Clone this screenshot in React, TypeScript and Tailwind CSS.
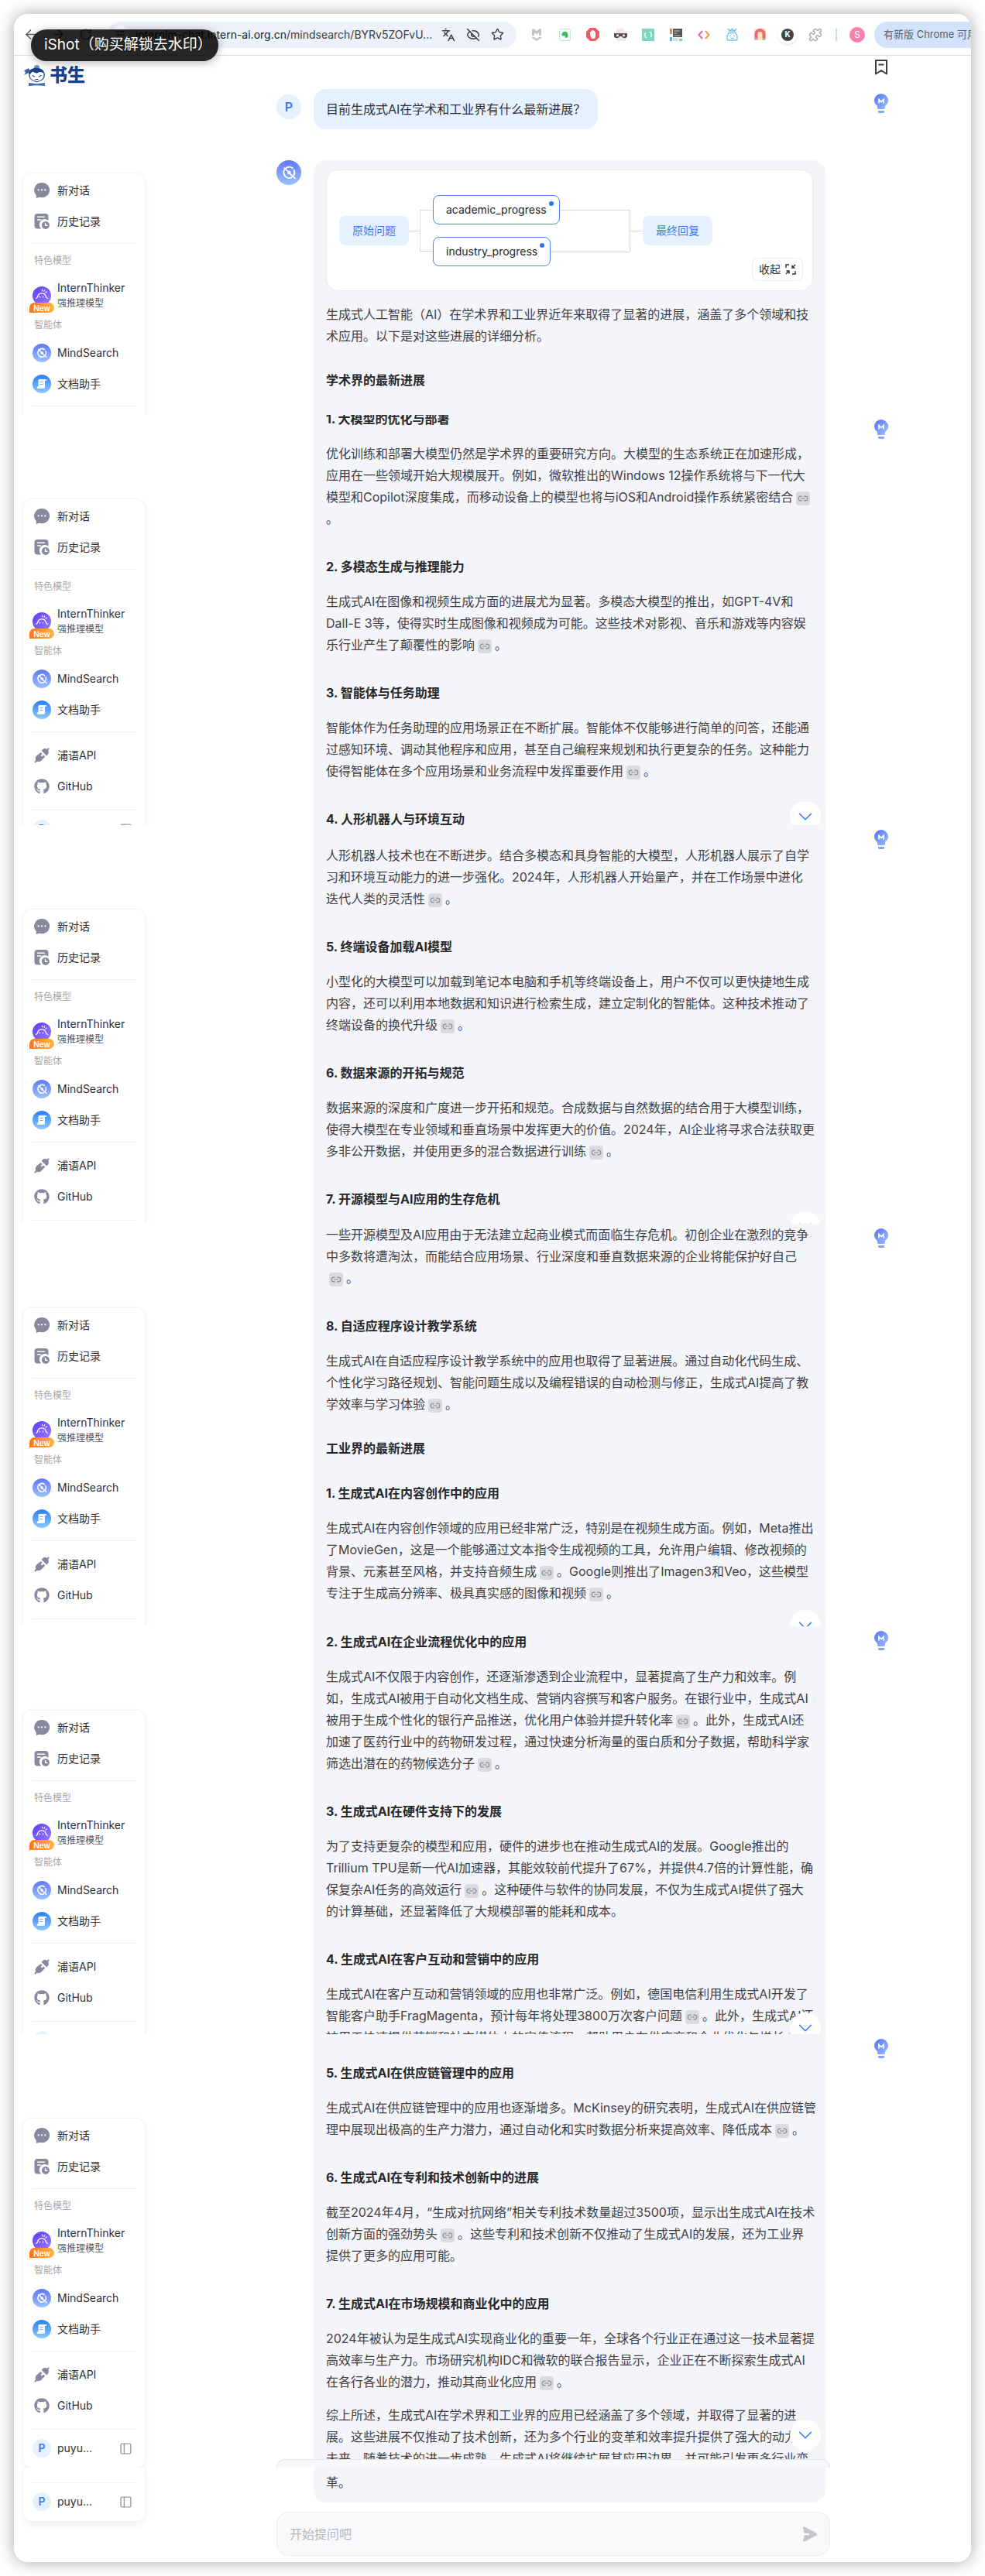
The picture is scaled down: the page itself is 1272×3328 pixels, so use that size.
import { useState, type ReactNode } from "react";
import { ArrowLeft, ArrowRight, ChevronDown, EyeOff, Languages, Link2, PanelLeft, Puzzle, RotateCw, SlidersHorizontal, Star } from "lucide-react";
import { FaGithub } from "react-icons/fa";

/* ---------- icons ---------- */

function ChatIcon() {
  return (
    <svg width="20" height="20" viewBox="0 0 20 20" aria-hidden="true">
      <path d="M10 0a10 9.6 0 1 1-2.800 18.800L2.800 20v-3.800A9.600 9.600 0 0 1 10 0z" fill="#868a9c" />
      <circle cx="5.600" cy="9.400" r="1.100" fill="#fff" />
      <circle cx="10" cy="9.400" r="1.100" fill="#fff" />
      <circle cx="14.400" cy="9.400" r="1.100" fill="#fff" />
    </svg>
  );
}

function HistoryIcon() {
  return (
    <svg width="20" height="20" viewBox="0 0 20 20" aria-hidden="true">
      <path d="M4.500 0h10A4 4 0 0 1 18.500 4v4.800A6.600 6.600 0 0 0 9.200 19.500H4.500a4 4 0 0 1-4-4V4a4 4 0 0 1 4-4z" fill="#868a9c" />
      <path d="M4.500 4.300h9M4.500 8h4" stroke="#fff" strokeWidth="1.600" strokeLinecap="round" />
      <circle cx="14.900" cy="15" r="5" fill="#868a9c" />
      <path d="M14.600 12.500V15.300H17" stroke="#fff" strokeWidth="1.400" fill="none" strokeLinecap="round" />
    </svg>
  );
}

function ThinkerIcon() {
  return (
    <svg width="24" height="24" viewBox="0 0 24 24" aria-hidden="true">
      <defs>
        <linearGradient id="thinker" x1="0" y1="0" x2="1" y2="1">
          <stop offset="0" stopColor="#5b3bfa" />
          <stop offset="1" stopColor="#9a7bff" />
        </linearGradient>
      </defs>
      <circle cx="12" cy="12" r="12" fill="url(#thinker)" />
      <path d="M4.500 15.500c1.500-.5 2-1.500 2.300-3a5.500 5.500 0 0 1 10.400.2c.3 1.300.9 2.300 2.300 2.800" stroke="#fff" strokeWidth="1.300" fill="none" strokeLinecap="round" />
      <path d="M12.500 4.200v1.600M15.600 4.800l-.6 1.600M18.200 7l-1.300 1.100" stroke="#fff" strokeWidth="1.200" strokeLinecap="round" />
      <path d="M9.500 13v1M13.500 13v1" stroke="#fff" strokeWidth="1.300" strokeLinecap="round" />
    </svg>
  );
}

function SearchLogo({ className }: { className: string }) {
  return (
    <svg className={className} viewBox="0 0 24 24" aria-hidden="true">
      <defs>
        <linearGradient id="mind" x1="0" y1="0" x2="0" y2="1">
          <stop offset="0" stopColor="#5f78f8" />
          <stop offset="1" stopColor="#9dc0fd" />
        </linearGradient>
      </defs>
      <circle cx="12" cy="12" r="12" fill="url(#mind)" />
      <path d="M15.500 7.600A5.300 5.300 0 1 0 14.800 16.600M17 9.600a5.300 5.300 0 0 1-.3 5" stroke="#fff" strokeWidth="1.500" fill="none" strokeLinecap="round" />
      <circle cx="12.200" cy="12" r="1.800" fill="#fff" />
      <path d="M7.500 7.600l3.500 3M13.500 13.500l4.500 4" stroke="#fff" strokeWidth="1.300" strokeLinecap="round" />
    </svg>
  );
}

function DocIcon() {
  return (
    <svg width="24" height="24" viewBox="0 0 24 24" aria-hidden="true">
      <defs>
        <linearGradient id="doc" x1="0" y1="0" x2="0" y2="1">
          <stop offset="0" stopColor="#2a7ff8" />
          <stop offset="1" stopColor="#8fc8fd" />
        </linearGradient>
      </defs>
      <circle cx="12" cy="12" r="12" fill="url(#doc)" />
      <path d="M8.500 6h8.500a1.300 1.300 0 0 1 1.300 1.800H16V16a2 2 0 0 1-2 2H7a1.600 1.600 0 0 1-1-2.500h1.500V7z" fill="#fff" />
      <path d="M9.500 9.500h4M9.500 12.500h4" stroke="#6fb0fb" strokeWidth="1" />
    </svg>
  );
}

function PlugIcon() {
  return (
    <svg width="20" height="20" viewBox="0 0 20 20" fill="#868a9c" aria-hidden="true">
      <path d="M19.800 1.200L18.800.2l-2.200 1.600a5 5 0 0 0-5.800.8L9.600 3.800l6.600 6.600 1.200-1.200a5 5 0 0 0 .8-5.800z" />
      <path d="M8.700 5.900L3.200 10.600a5 5 0 0 0-1.100 5.300L.2 18.800l1 1 2.700-2a5 5 0 0 0 5.400-1l4.900-5.300-2.100-2-2 2.100-1.600-1.600 2-2z" />
    </svg>
  );
}

function BulbIcon() {
  return (
    <svg width="18" height="25" viewBox="0 0 18 25" aria-hidden="true">
      <defs>
        <linearGradient id="bulb" x1="0" y1="0" x2="1" y2="1">
          <stop offset="0" stopColor="#5470f8" />
          <stop offset="1" stopColor="#9ec2fd" />
        </linearGradient>
      </defs>
      <path d="M9 0a9 9 0 0 1 9 9c0 3.500-2 5.200-3.700 6.700L13.600 20H4.400l-.7-4.300C2 14.200 0 12.500 0 9a9 9 0 0 1 9-9z" fill="url(#bulb)" />
      <path d="M5 22h8v1.500a1.500 1.500 0 0 1-1.500 1.500h-5A1.500 1.500 0 0 1 5 23.500z" fill="#86a6fb" />
      <path d="M6 12.500v-5l3 3 3-3v5" stroke="#fff" strokeWidth="1.700" fill="none" />
    </svg>
  );
}

function BrandMark() {
  return (
    <svg width="28" height="27" viewBox="0 0 28 33" preserveAspectRatio="none" aria-hidden="true">
      <circle cx="16.500" cy="3.500" r="3.500" fill="#7a8fbe" />
      <path d="M6 13C6 7 11 4.500 16 4.500S26 7.500 26.500 14l-3-2.500-3.500-.5-4 2-5-2.500L7.500 15z" fill="#17408e" />
      <path d="M0 9l6-4 1 3 3-1-5 6-5 3 2-4z" fill="#4764a3" />
      <path d="M7 14c-1 6 1 10 9.500 12.500C25 24 27 20 26 13" stroke="#17408e" strokeWidth="1.200" fill="none" />
      <path d="M10.500 16l3.500 2.500M22.500 16L19 18.500M14.500 22.500h4" stroke="#17408e" strokeWidth="1.300" />
      <path d="M6 28l10.500 1.500L27 28v5l-10.500-1L6 33z" fill="#4a69a9" />
    </svg>
  );
}

function CollapseIcon() {
  return (
    <svg width="14" height="14" viewBox="0 0 14 14" fill="none" stroke="currentColor" strokeWidth="1.400" aria-hidden="true">
      <path d="M1 5V1h4M13 9v4H9M9 1.500V5h3.500M9 5l4-4M5 12.500V9H1.500M5 9l-4 4" />
    </svg>
  );
}

/* ---------- shared parts ---------- */

function Cite() {
  return (
    <button type="button" aria-label="查看引用" className="mx-1 inline-flex h-[18px] w-[18px] items-center justify-center rounded bg-[#d9dbe0] align-[-3px] text-[#8b8e98]">
      <Link2 size={14} />
    </button>
  );
}

/* "[]" inside a line marks a citation chip */
function Line({ text }: { text: string }) {
  const parts = text.split("[]");
  return (
    <span className="block h-7 whitespace-nowrap">
      {parts.map((part, i) => (
        <span key={i}>
          {i > 0 && <Cite />}
          {part}
        </span>
      ))}
    </span>
  );
}

function Para({ lines }: { lines: string[] }) {
  return (
    <p className="mb-[34px]">
      {lines.map((line) => (
        <Line key={line} text={line} />
      ))}
    </p>
  );
}

function Title({ children }: { children: ReactNode }) {
  return <h3 className="mb-[17px] font-bold text-[#27282c]">{children}</h3>;
}

function UserBadge({ className }: { className: string }) {
  return <span className={className}>P</span>;
}

const rowStyle = "flex h-10 w-full items-center gap-2.5 text-left text-sm text-[#2f3035]";

function AccountRow() {
  return (
    <div className="mx-3 border-t border-[#f0f0f2] pt-3 pb-[13px]">
      <div className="flex items-center justify-between">
        <a href="#account" className="flex items-center gap-2 text-sm text-[#2f3035]">
          <UserBadge className="flex size-6 items-center justify-center rounded-full bg-[#e5f1fe] text-sm font-semibold text-[#3a7bf5]" />
          puyu...
        </a>
        <button type="button" aria-label="收起侧栏" className="mr-1 text-[#9a9dab]">
          <PanelLeft size={17} />
        </button>
      </div>
    </div>
  );
}

function SidePanel() {
  return (
    <nav className="ml-[11px] w-[159px] rounded-xl border border-[#f2f3f5] bg-white pt-0.5 shadow-[0_3px_10px_rgba(0,0,0,0.05)]">
      <div className="mx-3 flex flex-col border-b border-[#f0f0f2] px-0.5 pb-2">
        <button type="button" className={rowStyle}><ChatIcon />新对话</button>
        <button type="button" className={rowStyle}><HistoryIcon />历史记录</button>
      </div>
      <p className="mx-3.5 mt-3 text-xs leading-5 text-[#a6a7ac]">特色模型</p>
      <a href="#thinker" className="mx-3 mt-[13px] flex h-11 items-center gap-2">
        <span className="relative">
          <ThinkerIcon />
          <span className="absolute -bottom-2.5 -left-1 flex h-[13px] w-8 items-center justify-center rounded-full rounded-bl-sm bg-linear-to-r from-[#ff7416] to-[#ffb445] text-[10px] leading-none font-semibold text-white">New</span>
        </span>
        <span className="text-[#2f3035]">
          <span className="block text-sm leading-5">InternThinker</span>
          <span className="block text-xs leading-5 whitespace-nowrap text-[#55565b]">强推理模型</span>
        </span>
      </a>
      <p className="mx-3.5 mt-1.5 text-xs leading-5 text-[#a6a7ac]">智能体</p>
      <div className="mx-3 flex flex-col border-b border-[#f0f0f2] pt-1.5 pb-2">
        <a href="#mindsearch" className="flex h-10 items-center gap-2 text-sm text-[#2f3035]"><SearchLogo className="size-6" />MindSearch</a>
        <a href="#docs" className="flex h-10 items-center gap-2 text-sm text-[#2f3035]"><DocIcon />文档助手</a>
      </div>
      <div className="mx-3 flex flex-col px-0.5 py-2.5">
        <a href="#api" className={rowStyle}><PlugIcon />浦语API</a>
        <a href="#github" className={rowStyle}><FaGithub size={20} color="#868a9c" />GitHub</a>
      </div>
      <AccountRow />
    </nav>
  );
}

function Bulb() {
  return (
    <button type="button" aria-label="灵感" className="block"><BulbIcon /></button>
  );
}

function ScrollDown({ className }: { className: string }) {
  return (
    <button type="button" aria-label="滚动到底部" className={className}>
      <ChevronDown size={30} strokeWidth={1.25} />
    </button>
  );
}

function Slice({ className, bodyClass, scroll, children }: { className: string; bodyClass: string; scroll: string; children: ReactNode }) {
  return (
    <section className={className}>
      <aside className="w-[339px] shrink-0 pt-[108px]"><SidePanel /></aside>
      <div className="min-w-0 flex-1 pr-1.5 pl-12">
        <div className="relative h-full overflow-hidden bg-[#f4f5f9]">
          <div className={bodyClass}>{children}</div>
          <ScrollDown className={scroll} />
        </div>
      </div>
      <div className="w-[182px] shrink-0 pt-1.5 pl-[57px]"><Bulb /></div>
    </section>
  );
}

const tag = "flex h-[38px] w-[90px] items-center justify-center rounded-lg bg-[#e5f1fe] text-[#3a7bf5]";
const node = "relative flex h-[38px] w-fit items-center rounded-lg border border-[#4c87f6] bg-white px-4 text-[#1d1e22]";
const dot = "absolute top-[7px] right-[7px] size-1.5 rounded-full bg-[#2f74f6]";

function FlowCard() {
  return (
    <div className="relative mb-4 flex h-[157px] rounded-2xl border border-[#ebecf2] bg-white pt-8 pl-4 text-sm">
      <div className="flex h-[92px] items-center">
        <button type="button" className={tag}>原始问题</button>
        <span className="h-px w-3.5 bg-[#d8dadf]" />
        <span className="h-[54px] w-[17px] border-y border-l border-[#d8dadf]" />
      </div>
      <div className="flex h-[92px] w-[254px] flex-col justify-between">
        <div className="flex items-center">
          <button type="button" className={node}>academic_progress<span className={dot} /></button>
          <span className="h-px flex-1 bg-[#d8dadf]" />
        </div>
        <div className="flex items-center">
          <button type="button" className={node}>industry_progress<span className={dot} /></button>
          <span className="h-px flex-1 bg-[#d8dadf]" />
        </div>
      </div>
      <div className="flex h-[92px] items-center">
        <span className="h-[54px] w-px bg-[#d8dadf]" />
        <span className="h-px w-4 bg-[#d8dadf]" />
        <button type="button" className={tag}>最终回复</button>
      </div>
      <button type="button" className="absolute right-3 bottom-3 flex h-[30px] items-center gap-1.5 rounded-lg border border-[#ebecf0] bg-white px-2 text-[#2f3035]">
        收起<CollapseIcon />
      </button>
    </div>
  );
}

const ext = "flex w-5 items-center justify-center";

function Toolbar() {
  return (
    <header className="flex h-[54px] items-center border-b border-[#dcdde0] pl-3 text-[#5f6368]">
      <div className="flex w-[109px] shrink-0 items-center gap-[17px]">
        <ArrowLeft size={19} /><ArrowRight size={19} /><RotateCw size={17} />
      </div>
      <div className="flex h-[34px] w-[528px] shrink-0 items-center rounded-full bg-[#edf1fa] pl-1 text-[#3c4043]">
        <span className="flex size-6 items-center justify-center rounded-full bg-white"><SlidersHorizontal size={14} /></span>
        <span className="ml-2 text-sm whitespace-nowrap"><span className="text-[#202124]">internlm-chat.intern-ai.org.cn</span>/mindsearch/BYRv5ZOFvU...</span>
        <span className="ml-auto flex items-center gap-3.5 pr-4"><Languages size={18} /><EyeOff size={18} /><Star size={17} /></span>
      </div>
      <div className="ml-4 flex shrink-0 items-center gap-4">
        <span className={ext}>
          <svg width="12" height="16" viewBox="0 0 12 16" fill="#c4c4c4"><path d="M0 1l2-1 4 3 4-3 2 1v8h-3V5L6 7.500 3 5v4H0zM0 11h3l3 2 3-2h3v1l-6 4-6-4z" /></svg>
        </span>
        <span className={ext}>
          <svg width="15" height="16" viewBox="0 0 15 16"><rect x=".5" y=".5" width="14" height="15" rx="2" fill="#f7fcf8" stroke="#a5dfb4" strokeDasharray="2 1" /><path d="M5 4.500c3-1.500 6.500-.5 6.500 4 0 2.500-1 3.500-3 3.500l-1-2.500-4-.5V6.500z" fill="#43b965" /></svg>
        </span>
        <span className={ext}>
          <svg width="17" height="17" viewBox="0 0 17 17"><path d="M5 0h7l5 5v7l-5 5H5l-5-5V5z" fill="#ee5a60" /><path d="M5 8V5h1.500V3.500H8V3h1.500v1H11v1.500h1V10c0 3-1.500 4-3.500 4S6 12 5 8z" fill="#fff" /></svg>
        </span>
        <span className={ext}>
          <svg width="17" height="16" viewBox="0 0 17 16"><path d="M3 0h8l4 4v12H3z" fill="#ebebeb" /><path d="M0 6h17v4c-1 3-6 3-7 0H7c-1 3-6 3-7 0z" fill="#5f4a50" /><circle cx="4.500" cy="8.700" r="1.500" fill="#fff" /><circle cx="12.500" cy="8.700" r="1.500" fill="#fff" /></svg>
        </span>
        <span className={ext}>
          <svg width="16" height="16" viewBox="0 0 16 16"><path d="M0 0h16v16H0z" fill="#80d5be" /><path d="M5 5a4.500 4.500 0 0 0 0 6l1 1M11 11a4.500 4.500 0 0 0 0-6l-1-1" stroke="#fff" fill="none" strokeWidth="1.300" /></svg>
        </span>
        <span className={ext}>
          <svg width="16" height="16" viewBox="0 0 16 16"><path d="M4 0h12v11H4z" fill="#555" /><path d="M0 0h3v7H0z" fill="#f08072" /><path d="M0 11h3v5H0z" fill="#54b5e8" /><path d="M4 12h7v4H4z" fill="#ddd" /><path d="M12 13h4v3h-4z" fill="#6dd6a8" /><path d="M5.500 3h7M5.500 6h4M5.500 9h8" stroke="#ccc" /></svg>
        </span>
        <span className={ext}>
          <svg width="16" height="12" viewBox="0 0 16 12" fill="none" strokeWidth="2"><path d="M6 1L1.500 6 6 11" stroke="#ea62a8" /><path d="M10 1l4.500 5L10 11" stroke="#f79a4b" /></svg>
        </span>
        <span className={ext}>
          <svg width="15" height="17" viewBox="0 0 15 17" fill="none" stroke="#6fc3f2" strokeWidth="1.300"><path d="M2 1l2.500 3L7.500 1l3 3L13 1M3 4h9M3 6.500h9L14 11v3.500a1.500 1.500 0 0 1-1.500 1.500h-10A1.500 1.500 0 0 1 1 14.500V11z" /><path d="M5 9.500v1.500M10 9.500v1.500M5.500 13.300h4" /></svg>
        </span>
        <span className={ext}>
          <svg width="15" height="15" viewBox="0 0 15 15"><path d="M0 0h15v15H0z" fill="#fbe3c4" /><path d="M2.500 12.500V7a5 5 0 0 1 10 0v5.500" stroke="#e96a70" strokeWidth="4" fill="none" /><path d="M.5 12.500h4v2h-4zM10.500 12.500h4v2h-4z" fill="#a9a5a5" /></svg>
        </span>
        <span className={ext}>
          <span className="flex size-6 shrink-0 items-center justify-center rounded-full bg-white shadow"><span className="flex size-4 items-center justify-center rounded-full bg-[#444] text-[10px] font-bold text-white">K</span></span>
        </span>
        <span className={ext}><Puzzle size={18} color="#aaa" /></span>
      </div>
      <span className="ml-4 h-4 w-0.5 shrink-0 bg-[#c6dafc]" />
      <span className="ml-4 flex size-5 shrink-0 items-center justify-center rounded-full bg-[#f481ae] text-xs text-white">S</span>
      <button type="button" className="ml-3 flex h-[34px] min-w-0 flex-1 items-center overflow-hidden rounded-l-full bg-[#d3e3fd] pl-3 text-[13px] whitespace-nowrap text-[#55606e]">有新版 Chrome 可用</button>
    </header>
  );
}

export default function App() {
  const [question, setQuestion] = useState("");
  return (
    <div className="bg-white px-[18px] pt-[18px] pb-[18px] font-[Inter,'Noto_Sans_CJK_SC',sans-serif] text-[#3f4046]">
      <div className="relative rounded-[18px] bg-white shadow-[0_0_22px_rgba(0,0,0,0.35)]">
        <div className="overflow-hidden rounded-[18px]">
          <Toolbar />

          <section className="flex h-[464px] overflow-hidden">
            <aside className="w-[339px] shrink-0">
              <a href="#home" className="mt-[9px] ml-[13px] flex h-8 items-center gap-[5px] text-[23px] font-black text-[#17408e]"><BrandMark />书生</a>
              <div className="mt-[110px]"><SidePanel /></div>
            </aside>
            <div className="min-w-0 flex-1 pt-[43px] pr-1.5">
              <div className="flex items-start gap-4">
                <UserBadge className="mt-[7px] flex size-8 shrink-0 items-center justify-center rounded-full bg-[#e5f1fe] font-semibold text-[#3a7bf5]" />
                <p className="rounded-2xl bg-[#e5f1fe] px-4 py-3 leading-7 text-[#2f3035]">目前生成式AI在学术和工业界有什么最新进展？</p>
              </div>
              <div className="mt-10 flex gap-4">
                <SearchLogo className="size-8 shrink-0" />
                <div className="min-w-0 flex-1 rounded-t-2xl bg-[#f4f5f9] px-4 pt-3 pb-10 leading-7">
                  <FlowCard />
                  <p className="mb-[29px]">
                    <Line text="生成式人工智能（AI）在学术界和工业界近年来取得了显著的进展，涵盖了多个领域和技" />
                    <Line text="术应用。以下是对这些进展的详细分析。" />
                  </p>
                  <h2 className="font-bold text-[#27282c]">学术界的最新进展</h2>
                </div>
              </div>
            </div>
            <div className="w-[182px] shrink-0 pt-[5px] pl-[57px]">
              <button type="button" aria-label="收藏" className="mb-6 block text-[#3f4046]">
                <svg width="18" height="20" viewBox="0 0 18 20" fill="none" stroke="currentColor" strokeWidth="2" strokeLinejoin="round"><path d="M2 1h14v17.500L9 14l-7 4.500zM5.500 6.500h7" /></svg>
              </button>
              <Bulb />
            </div>
          </section>

          <Slice className="flex h-[530px] overflow-hidden" bodyClass="-mt-[9px] px-4 leading-7" scroll="absolute -bottom-[9px] right-1.5 flex size-10 items-center justify-center rounded-full bg-white text-[#3a7bf5]">
            <Title>1. 大模型的优化与部署</Title>
            <Para lines={["优化训练和部署大模型仍然是学术界的重要研究方向。大模型的生态系统正在加速形成，", "应用在一些领域开始大规模展开。例如，微软推出的Windows 12操作系统将与下一代大", "模型和Copilot深度集成，而移动设备上的模型也将与iOS和Android操作系统紧密结合[]", "。"]} />
            <Title>2. 多模态生成与推理能力</Title>
            <Para lines={["生成式AI在图像和视频生成方面的进展尤为显著。多模态大模型的推出，如GPT-4V和", "Dall-E 3等，使得实时生成图像和视频成为可能。这些技术对影视、音乐和游戏等内容娱", "乐行业产生了颠覆性的影响[]。"]} />
            <Title>3. 智能体与任务助理</Title>
            <Para lines={["智能体作为任务助理的应用场景正在不断扩展。智能体不仅能够进行简单的问答，还能通", "过感知环境、调动其他程序和应用，甚至自己编程来规划和执行更复杂的任务。这种能力", "使得智能体在多个应用场景和业务流程中发挥重要作用[]。"]} />
            <Title>4. 人形机器人与环境互动</Title>
          </Slice>

          <Slice className="flex h-[515px] overflow-hidden" bodyClass="px-4 pt-[25px] leading-7" scroll="absolute -bottom-6 right-1.5 flex size-10 items-center justify-center rounded-full bg-white text-[#3a7bf5]">
            <Para lines={["人形机器人技术也在不断进步。结合多模态和具身智能的大模型，人形机器人展示了自学", "习和环境互动能力的进一步强化。2024年，人形机器人开始量产，并在工作场景中进化", "迭代人类的灵活性[]。"]} />
            <Title>5. 终端设备加载AI模型</Title>
            <Para lines={["小型化的大模型可以加载到笔记本电脑和手机等终端设备上，用户不仅可以更快捷地生成", "内容，还可以利用本地数据和知识进行检索生成，建立定制化的智能体。这种技术推动了", "终端设备的换代升级[]。"]} />
            <Title>6. 数据来源的开拓与规范</Title>
            <Para lines={["数据来源的深度和广度进一步开拓和规范。合成数据与自然数据的结合用于大模型训练，", "使得大模型在专业领域和垂直场景中发挥更大的价值。2024年，AI企业将寻求合法获取更", "多非公开数据，并使用更多的混合数据进行训练[]。"]} />
            <Title>7. 开源模型与AI应用的生存危机</Title>
          </Slice>

          <Slice className="flex h-[520px] overflow-hidden" bodyClass="px-4 leading-7" scroll="absolute -bottom-[19px] right-1.5 flex size-10 items-center justify-center rounded-full bg-white text-[#3a7bf5]">
            <Para lines={["一些开源模型及AI应用由于无法建立起商业模式而面临生存危机。初创企业在激烈的竞争", "中多数将遭淘汰，而能结合应用场景、行业深度和垂直数据来源的企业将能保护好自己", "[]。"]} />
            <Title>8. 自适应程序设计教学系统</Title>
            <Para lines={["生成式AI在自适应程序设计教学系统中的应用也取得了显著进展。通过自动化代码生成、", "个性化学习路径规划、智能问题生成以及编程错误的自动检测与修正，生成式AI提高了教", "学效率与学习体验[]。"]} />
            <h2 className="-mt-[5px] mb-[30px] font-bold text-[#27282c]">工业界的最新进展</h2>
            <Title>1. 生成式AI在内容创作中的应用</Title>
            <Para lines={["生成式AI在内容创作领域的应用已经非常广泛，特别是在视频生成方面。例如，Meta推出", "了MovieGen，这是一个能够通过文本指令生成视频的工具，允许用户编辑、修改视频的", "背景、元素甚至风格，并支持音频生成[]。Google则推出了Imagen3和Veo，这些模型", "专注于生成高分辨率、极具真实感的图像和视频[]。"]} />
          </Slice>

          <Slice className="flex h-[527px] overflow-hidden" bodyClass="px-4 pt-1.5 leading-7" scroll="absolute -bottom-3 right-1.5 flex size-10 items-center justify-center rounded-full bg-white text-[#3a7bf5]">
            <Title>2. 生成式AI在企业流程优化中的应用</Title>
            <Para lines={["生成式AI不仅限于内容创作，还逐渐渗透到企业流程中，显著提高了生产力和效率。例", "如，生成式AI被用于自动化文档生成、营销内容撰写和客户服务。在银行业中，生成式AI", "被用于生成个性化的银行产品推送，优化用户体验并提升转化率[]。此外，生成式AI还", "加速了医药行业中的药物研发过程，通过快速分析海量的蛋白质和分子数据，帮助科学家", "筛选出潜在的药物候选分子[]。"]} />
            <Title>3. 生成式AI在硬件支持下的发展</Title>
            <Para lines={["为了支持更复杂的模型和应用，硬件的进步也在推动生成式AI的发展。Google推出的", "Trillium TPU是新一代AI加速器，其能效较前代提升了67%，并提供4.7倍的计算性能，确", "保复杂AI任务的高效运行[]。这种硬件与软件的协同发展，不仅为生成式AI提供了强大", "的计算基础，还显著降低了大规模部署的能耗和成本。"]} />
            <Title>4. 生成式AI在客户互动和营销中的应用</Title>
            <Para lines={["生成式AI在客户互动和营销领域的应用也非常广泛。例如，德国电信利用生成式AI开发了", "智能客户助手FragMagenta，预计每年将处理3800万次客户问题[]。此外，生成式AI还", "被用于快速提供营销和社交媒体上的宣传流程，帮助用户在供应商和企业优化与增长[]"]} />
          </Slice>

          <Slice className="flex h-[560px] overflow-hidden" bodyClass="h-[549px] overflow-hidden px-4 pt-9 leading-7" scroll="absolute bottom-[22px] right-1.5 flex size-10 items-center justify-center rounded-full bg-white text-[#3a7bf5]">
            <Title>5. 生成式AI在供应链管理中的应用</Title>
            <Para lines={["生成式AI在供应链管理中的应用也逐渐增多。McKinsey的研究表明，生成式AI在供应链管", "理中展现出极高的生产力潜力，通过自动化和实时数据分析来提高效率、降低成本[]。"]} />
            <Title>6. 生成式AI在专利和技术创新中的进展</Title>
            <Para lines={["截至2024年4月，“生成对抗网络”相关专利技术数量超过3500项，显示出生成式AI在技术", "创新方面的强劲势头[]。这些专利和技术创新不仅推动了生成式AI的发展，还为工业界", "提供了更多的应用可能。"]} />
            <Title>7. 生成式AI在市场规模和商业化中的应用</Title>
            <div className="-mb-[19px]">
              <Para lines={["2024年被认为是生成式AI实现商业化的重要一年，全球各个行业正在通过这一技术显著提", "高效率与生产力。市场研究机构IDC和微软的联合报告显示，企业正在不断探索生成式AI", "在各行各业的潜力，推动其商业化应用[]。"]} />
            </div>
            <Para lines={["综上所述，生成式AI在学术界和工业界的应用已经涵盖了多个领域，并取得了显著的进", "展。这些进展不仅推动了技术创新，还为多个行业的变革和效率提升提供了强大的动力。", "未来，随着技术的进一步成熟，生成式AI将继续扩展其应用边界，并可能引发更多行业变"]} />
          </Slice>

          <section className="flex pb-2">
            <aside className="w-[339px] shrink-0">
              <div className="ml-[11px] w-[159px] rounded-b-xl border border-t-0 border-[#f2f3f5] pt-[19px] shadow-[0_5px_8px_rgba(0,0,0,0.05)]"><AccountRow /></div>
            </aside>
            <div className="relative min-w-0 flex-1">
              <div className="absolute inset-x-0 -top-[11px] h-[11px] rounded-t-2xl border border-b-0 border-[#e6e7eb] bg-[#f8f9fb]" />
              <p className="mr-1.5 ml-12 rounded-b-2xl bg-[#f4f5f9] px-4 pt-[5px] pb-3 leading-7">革。</p>
              <form className="mt-3 flex h-[57px] items-center rounded-2xl border border-[#ebecf0] bg-[#f8f9fb] px-4" onSubmit={(e) => e.preventDefault()}>
                <input aria-label="提问" value={question} onChange={(e) => setQuestion(e.target.value)} placeholder="开始提问吧" className="min-w-0 flex-1 bg-transparent outline-none placeholder:text-[#b5b6bb]" />
                <button type="submit" aria-label="发送">
                  <svg width="18" height="20" viewBox="0 0 18 20" fill="#c3c5cb"><path d="M1.500.3l15.700 8.200a1.700 1.700 0 0 1 0 3L1.500 19.700C.6 20.100-.2 19.300 0 18.400L1.800 11.300H8V8.700H1.800L0 1.600C-.2.700.6-.1 1.500.3z" /></svg>
                </button>
              </form>
            </div>
            <div className="w-[182px] shrink-0" />
          </section>
        </div>
        <div className="absolute top-5 left-[22px] flex h-[41px] w-[242px] items-center rounded-[20px] bg-black/85 pl-[17px] text-[19px] whitespace-nowrap text-white shadow-[0_2px_12px_rgba(0,0,0,0.3)]">iShot（购买解锁去水印）</div>
      </div>
    </div>
  );
}
